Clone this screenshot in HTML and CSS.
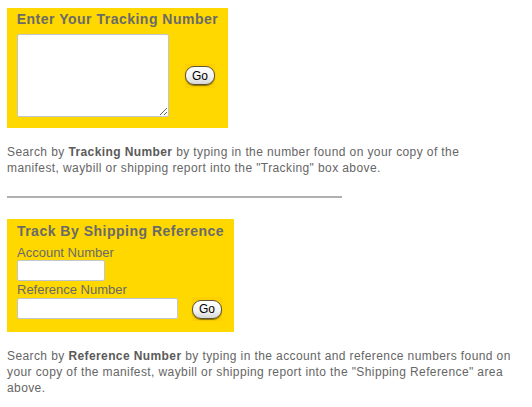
FILE: index.html
```html
<!DOCTYPE html>
<html lang="en">
<head>
  <meta charset="UTF-8" />
  <title>Track a Shipment</title>
  <link rel="stylesheet" href="styles.css">
</head>
<body>
  <div id="page">
    <div class="track-box box-number">
      <h3>Enter Your Tracking Number</h3>
      <div class="row">
        <textarea id="trackingNumbers"></textarea>
        <span class="go-wrap"><button class="go">Go</button></span>
      </div>
    </div>

    <p class="help">Search by <b>Tracking Number</b> by typing in the number found on your copy of the<br />
      manifest, waybill or shipping report into the "Tracking" box above.</p>

    <hr />

    <div class="track-box box-ref">
      <h3>Track By Shipping Reference</h3>
      <label for="account" class="first">Account Number</label>
      <input type="text" id="account" class="account" />
      <label for="reference">Reference Number</label>
      <div class="row">
        <input type="text" id="reference" class="reference" />
        <span class="go-wrap"><button class="go">Go</button></span>
      </div>
    </div>

    <p class="help">Search by <b>Reference Number</b> by typing in the account and reference numbers found on<br />
      your copy of the manifest, waybill or shipping report into the "Shipping Reference" area<br />
      above.</p>
  </div>
</body>
</html>
```

FILE: styles.css
```css
body {
  font-family: "Liberation Sans", Arial, sans-serif;
  margin: 0;
  background: white;
  color: #666;
}

#page {
  padding: 8px 7px;
  width: 518px;
}

.track-box {
  background-color: #ffd800;
  display: inline-flex;
  flex-direction: column;
  box-sizing: border-box;
}

.box-number {
  width: 221px;
  height: 120px;
  padding: 3px 10px 0 10px;
}

.box-ref {
  width: 227px;
  height: 113px;
  padding: 4px 10px 0 10px;
}

h3 {
  margin: 0 -10px;
  font-size: 14px;
  line-height: 16px;
  letter-spacing: 0.5px;
  color: #6a6a6a;
  text-align: center;
  white-space: nowrap;
}

.row {
  display: flex;
  align-items: center;
}

.box-ref .row {
  align-items: flex-start;
}

textarea {
  width: 152px;
  height: 83px;
  margin: 7px 0 0 0;
  box-sizing: border-box;
  border: 1px solid #c3c6cf;
  border-radius: 2px;
  resize: both;
  background: white;
}

label {
  font-size: 13px;
  line-height: 15px;
  color: #6a6a6a;
  margin-top: 1px;
}

label.first {
  margin-top: 6px;
}

input {
  box-sizing: border-box;
  height: 21px;
  margin: 1px 0 0 0;
  border: 1px solid #c3c6cf;
  border-radius: 2px;
  background: white;
}

.account {
  width: 88px;
  margin-top: 0;
}

.reference {
  width: 161px;
}

.go-wrap {
  background-color: #ffd000;
  padding: 2px 0;
  width: 30px;
  height: 20px;
  display: flex;
  align-items: center;
}

.box-number .go-wrap {
  margin: 7px 0 0 16px;
}

.box-ref .go-wrap {
  margin: 0 0 0 14px;
}

.go {
  font-family: "Liberation Sans", Arial, sans-serif;
  font-size: 12px;
  color: black;
  width: 30px;
  height: 19px;
  padding: 0;
  border: 1px solid #5e5630;
  border-radius: 9px;
  background: linear-gradient(#ffffff, #f2f2f2 60%, #d6d6d6);
  box-shadow: 0 1px 1px rgba(60, 50, 0, 0.6);
  cursor: pointer;
}

.help {
  font-size: 12px;
  line-height: 16px;
  letter-spacing: 0.4px;
  margin: 16px 0 0 0;
  white-space: nowrap;
}

.help b {
  color: #5a5a5a;
}

hr {
  width: 335px;
  margin: 20px 0 21px 0;
  border: none;
  border-top: 2px solid #b0b0b0;
  height: 0;
}
```
